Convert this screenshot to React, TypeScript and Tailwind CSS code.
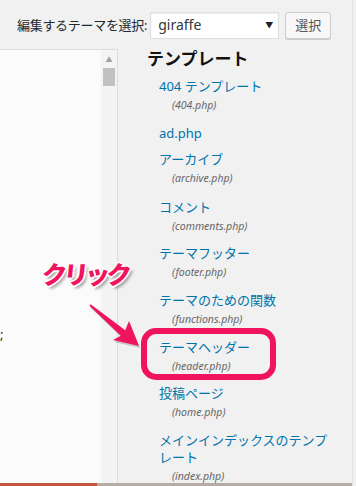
type TTemplate = {
    title: string,
    file?: string,
    gap: string
}

const templates: TTemplate[] = [
    { title: '404 テンプレート', file: '(404.php)', gap: 'mb-[9px]' },
    { title: 'ad.php', gap: 'mb-[6px]' },
    { title: 'アーカイブ', file: '(archive.php)', gap: 'mb-[10px]' },
    { title: 'コメント', file: '(comments.php)', gap: 'mb-[8px]' },
    { title: 'テーマフッター', file: '(footer.php)', gap: 'mb-[9px]' },
    { title: 'テーマのための関数', file: '(functions.php)', gap: 'mb-[9px]' },
    { title: 'テーマヘッダー', file: '(header.php)', gap: 'mb-[8px]' },
    { title: '投稿ページ', file: '(home.php)', gap: 'mb-[9px]' },
    { title: 'メインインデックスのテンプレート', file: '(index.php)', gap: 'mb-[9px]' },
]

const jp = "font-['Noto_Sans','Noto_Sans_CJK_JP',sans-serif]"

function App() {
    return (
        <div className={`relative w-[356px] h-[486px] overflow-hidden bg-[#f1f1f1] ${jp}`}>
            {/* theme picker */}
            <div className="flex items-center h-[49px] pl-[17px] pt-[1px]">
                <span className="text-[13px] leading-[20px] text-[#23282d] tracking-[-0.3px]">編集するテーマを選択:</span>
                <div className="ml-[3px] w-[129px] h-[27px] flex items-center justify-between bg-white border border-[#ddd] shadow-[inset_0_1px_2px_rgba(0,0,0,0.07)] pl-[7px] pr-[5px]">
                    <span className="text-[14px] leading-[20px] text-[#32373c]">giraffe</span>
                    <span className="text-[8px] text-[#222]">▼</span>
                </div>
                <button className="ml-[6px] w-[46px] h-[27px] bg-[#f7f7f7] border border-[#ccc] rounded-[3px] shadow-[0_1px_0_#ccc] text-[13px] leading-[20px] text-[#555]">選択</button>
            </div>

            <div className="flex h-[434px]">
                {/* editor textarea */}
                <div className="w-[118px] shrink-0 flex bg-[#fbfbfb] border-t border-r border-[#dcdcdc]">
                    <div className="flex-1 pt-[276px] text-[13px] leading-[16px] text-[#222]">;</div>
                    <div className="w-[16px] flex flex-col items-center bg-[#f4f4f4]">
                        <span className="mt-[6px] text-[7px] leading-[8px] text-[#a0a0a0]">▲</span>
                        <div className="mt-[4px] w-[12px] h-[18px] bg-[#c1c1c1]"></div>
                    </div>
                </div>

                {/* template list */}
                <div className="ml-[29px] -mt-[1px]">
                    <h2 className="text-[17px] leading-[22px] font-bold text-[#111]">テンプレート</h2>
                    <ul className="mt-[6px]">
                        {templates.map((t, i) => (
                            <li key={i} className={`pl-[12px] ${t.gap}`}>
                                <div className="w-[172px] text-[13px] leading-[17px] pt-[2px] pb-[1px] text-[#0073aa]">{t.title}</div>
                                {t.file && <div className="pl-[13px] text-[10.5px] leading-[18px] italic text-[#666]">{t.file}</div>}
                            </li>
                        ))}
                    </ul>
                </div>
            </div>

            <div className="flex h-[3px]">
                <div className="w-[97px] bg-[#c2593f]"></div>
                <div className="w-[255px] bg-[#b5aca5]"></div>
            </div>

            <div className="absolute top-0 bottom-0 left-[352px] w-px bg-[#e3e3e3]"></div>

            {/* annotation */}
            <span className="absolute left-[42px] top-[257px] text-[25px] leading-[34px] font-black text-[#f0145f] -skew-x-6 tracking-[-3.5px] [text-shadow:-1px_-1px_0_#fff,1px_-1px_0_#fff,-1px_1px_0_#fff,1px_1px_0_#fff,2px_0_0_#fff,0_2px_0_#fff,3px_3px_3px_rgba(0,0,0,0.35)]">クリック</span>
            <svg className="absolute inset-0 pointer-events-none" width="356" height="486" viewBox="0 0 356 486">
                <polygon points="91.5,306.2 126.2,332.3 130,323 140,348 114,342 121.8,337.7 90.4,307.8" fill="rgba(0,0,0,0.18)" />
                <polygon points="90.6,304.2 125.2,330.3 129,321 139,346 113,340 120.8,335.7 89.4,305.8" fill="#f0145f" />
            </svg>
            <div className="absolute left-[141px] top-[328px] w-[135px] h-[52px] border-[6px] border-[#f0145f] rounded-[15px]"></div>
        </div>
    )
}

export default App
